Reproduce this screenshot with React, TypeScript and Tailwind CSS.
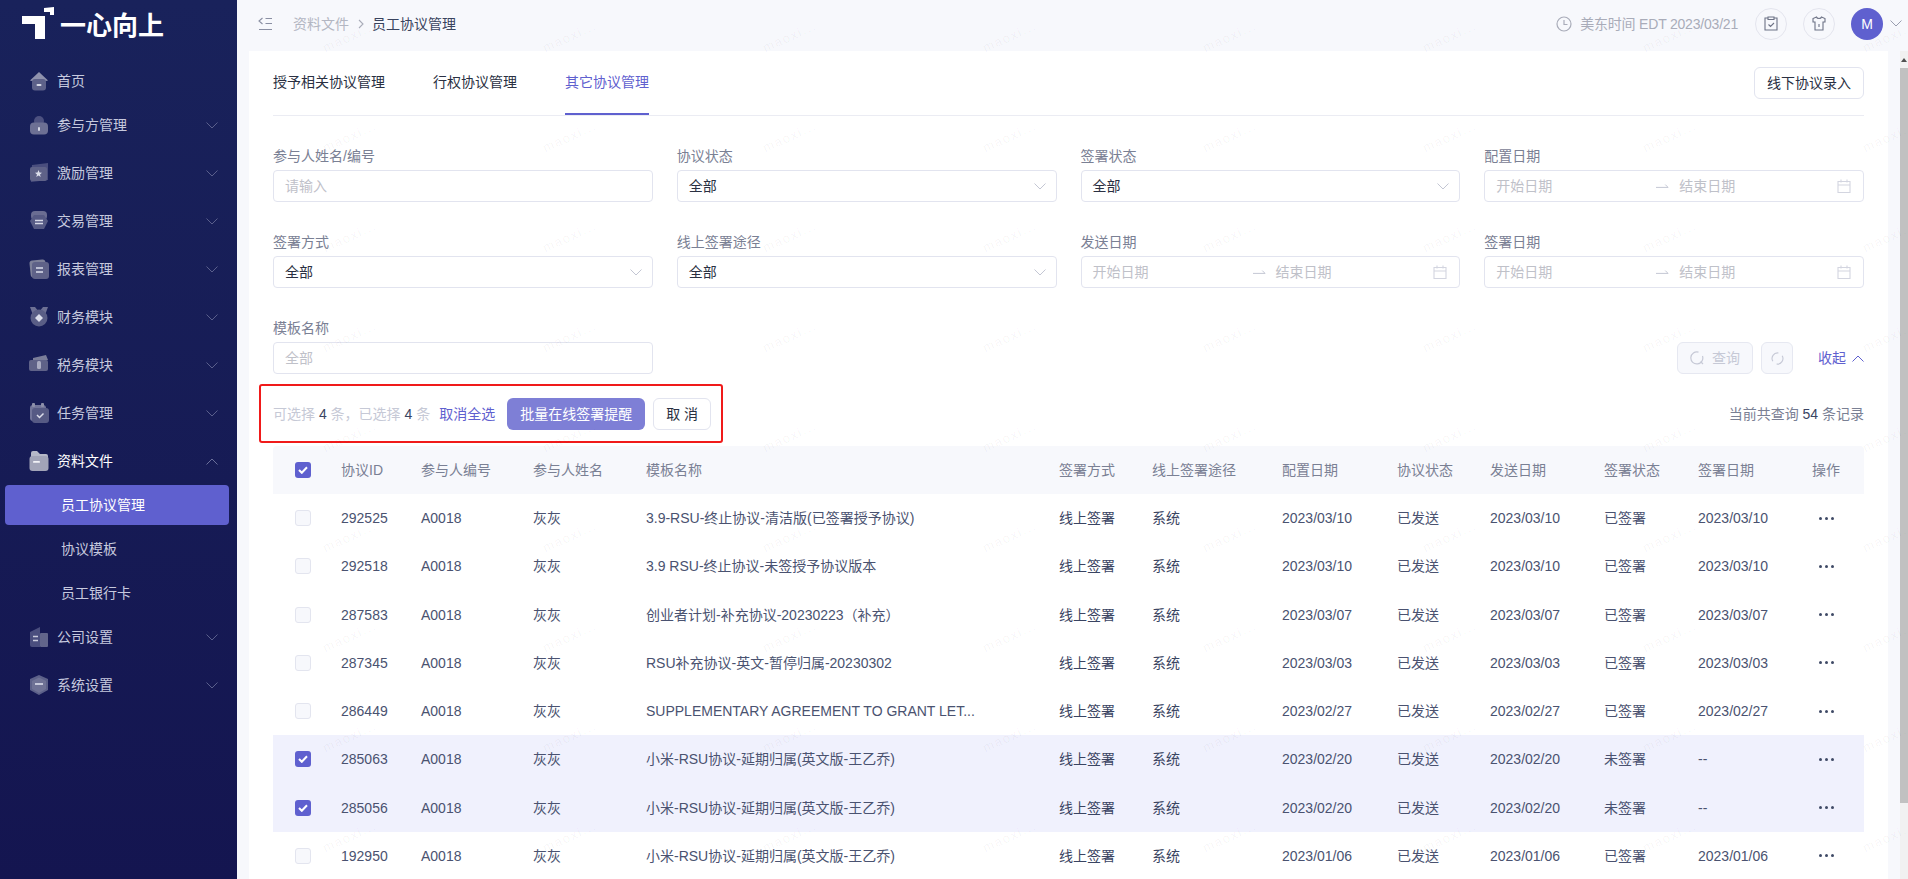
import type { ReactNode } from "react";

const menuIcons: Record<string, ReactNode> = {
  home: (
    <>
      <path d="M10 1 19 9.500 17 10H3L1 9.500z" fill="#8f92ad" />
      <rect x="3" y="8" width="14" height="11.500" rx="3" fill="#5d6189" />
      <rect x="7.500" y="13" width="5" height="2" rx="1" fill="#d6d8e6" />
    </>
  ),
  people: (
    <>
      <circle cx="10" cy="6" r="5" fill="#4d5180" />
      <rect x="1" y="7.500" width="18" height="12" rx="4" fill="#6d7094" />
      <rect x="9" y="12" width="2" height="4" rx="1" fill="#d6d8e6" />
    </>
  ),
  star: (
    <>
      <path d="M3 2 19 0V17L2 19z" fill="#4a4e7e" />
      <rect x="1" y="4" width="17" height="14" rx="2" fill="#5f6288" />
      <path d="m9.500 7 1 2.500 2.500.2-2 1.700.7 2.600-2.200-1.400-2.200 1.400.7-2.600-2-1.700 2.500-.2z" fill="#dcdeeb" />
    </>
  ),
  swap: (
    <>
      <rect x="2" y="0" width="16" height="9" rx="4" fill="#6a6d92" />
      <path d="M5 4h10l4 6-4 8H5l-4-8z" fill="#565a84" />
      <path d="M6 9.500h8M6 12.500h8" stroke="#d6d8e6" strokeWidth="1.300" />
    </>
  ),
  report: (
    <>
      <rect x="1" y="1" width="16" height="17" rx="3" fill="#7d8099" transform="rotate(-6 9 9)" />
      <rect x="3" y="3" width="17" height="17" rx="3" fill="#5f6288" />
      <path d="M7 9h7M7 13h7" stroke="#dcdeeb" strokeWidth="1.500" />
    </>
  ),
  medal: (
    <>
      <path d="M1 0h5l4 5 4-5h5l-3 8H4z" fill="#6d7094" />
      <circle cx="10" cy="11" r="8.500" fill="#5a5e86" />
      <path d="m10 7 4 4-4 4-4-4z" fill="#dcdeeb" />
    </>
  ),
  ticket: (
    <>
      <path d="M4 3 17 0l2 5-15 4z" fill="#7a7d99" />
      <rect x="0" y="5" width="19" height="11" rx="2" fill="#5f6288" />
      <rect x="8" y="6" width="4" height="8" rx="1.500" fill="#a9abc2" />
    </>
  ),
  task: (
    <>
      <rect x="1" y="2" width="16" height="16" rx="3" fill="#72759a" />
      <rect x="3" y="0" width="3" height="4" rx="1" fill="#8c8fa9" />
      <rect x="12" y="0" width="3" height="4" rx="1" fill="#8c8fa9" />
      <rect x="3" y="5" width="17" height="15" rx="3" fill="#565a84" />
      <path d="m8 12 2.500 2.500 4-4" fill="none" stroke="#dcdeeb" strokeWidth="1.500" />
    </>
  ),
  folder: (
    <>
      <path d="M2 2a2 2 0 0 1 2-2h4l3 3h6a2 2 0 0 1 2 2v6H2z" fill="#b6b8c8" />
      <rect x="0.500" y="5" width="19" height="15" rx="3" fill="#a2a4b8" />
      <rect x="4" y="10" width="7" height="1.800" rx="0.900" fill="#f2f2f7" />
    </>
  ),
  company: (
    <>
      <path d="M1 5 11 0v20H3a2 2 0 0 1-2-2z" fill="#4a4e7e" />
      <rect x="11" y="6" width="8" height="14" rx="1" fill="#62658b" />
      <path d="M4 9.500h5M4 13.500h5" stroke="#c9cbdc" strokeWidth="1.400" />
    </>
  ),
  shield: (
    <>
      <path d="M10 0 19 4v11l-9 5-9-5V4z" fill="#5d6189" />
      <path d="M10 2.500 17 6v8l-7 4-7-4V6z" fill="#6f7295" />
      <path d="M6 9h8" stroke="#dcdeeb" strokeWidth="1.600" />
    </>
  ),
};

function MenuIcon({ name }: { name: string }) {
  return (
    <svg viewBox="0 0 20 20" className="w-5 h-5 shrink-0">
      {menuIcons[name]}
    </svg>
  );
}

function Chevron({ up, className }: { up?: boolean; className?: string }) {
  return (
    <svg viewBox="0 0 12 7" fill="none" stroke="currentColor" strokeWidth="1" className={className}>
      <path d={up ? "M0.500 6.500 6 1l5.500 5.500" : "M0.500 0.500 6 6l5.500-5.500"} />
    </svg>
  );
}

const menu = [
  { icon: "people", label: "参与方管理" },
  { icon: "star", label: "激励管理" },
  { icon: "swap", label: "交易管理" },
  { icon: "report", label: "报表管理" },
  { icon: "medal", label: "财务模块" },
  { icon: "ticket", label: "税务模块" },
  { icon: "task", label: "任务管理" },
];

function Sidebar() {
  return (
    <aside className="w-[237px] shrink-0 h-full bg-gradient-to-b from-[#19225b] to-[#141550] text-[#c6c9de] text-sm">
      <div className="h-[61px] flex items-start pl-[22px] pt-[7px]">
        <svg viewBox="0 0 32 32" className="w-8 h-8 shrink-0">
          <path d="M0 9h23v23H13V17L11 17H0zM22 1l10-1v8h-4V5h-6z" fill="#fff" />
        </svg>
        <span className="ml-[6px] mt-[4px] text-[26px] leading-[30px] font-bold text-white whitespace-nowrap">
          一心向上
        </span>
      </div>
      <div className="h-10 flex items-center pl-[29px] gap-2">
        <MenuIcon name="home" />
        <span>首页</span>
      </div>
      {menu.map((m) => (
        <div key={m.label} className="h-12 flex items-center pl-[29px] pr-[19px] gap-2">
          <MenuIcon name={m.icon} />
          <span className="flex-1">{m.label}</span>
          <Chevron className="w-3 h-[7px] text-[#5a5f8c]" />
        </div>
      ))}
      <div className="h-12 flex items-center pl-[29px] pr-[19px] gap-2 text-white">
        <MenuIcon name="folder" />
        <span className="flex-1">资料文件</span>
        <Chevron up className="w-3 h-[7px] text-[#6a6f9a]" />
      </div>
      <div className="ml-[5px] w-[224px] h-10 rounded bg-[#5f60cf] text-white flex items-center pl-[56px]">员工协议管理</div>
      <div className="h-10 mt-1 flex items-center pl-[61px]">协议模板</div>
      <div className="h-10 mt-1 flex items-center pl-[61px]">员工银行卡</div>
      <div className="h-12 flex items-center pl-[29px] pr-[19px] gap-2">
        <MenuIcon name="company" />
        <span className="flex-1">公司设置</span>
        <Chevron className="w-3 h-[7px] text-[#5a5f8c]" />
      </div>
      <div className="h-12 flex items-center pl-[29px] pr-[19px] gap-2">
        <MenuIcon name="shield" />
        <span className="flex-1">系统设置</span>
        <Chevron className="w-3 h-[7px] text-[#5a5f8c]" />
      </div>
    </aside>
  );
}

function TopBar() {
  return (
    <header className="h-[51px] shrink-0 flex items-center text-sm pl-[21px] pr-[6px] pb-1">
      <svg viewBox="0 0 15 14" fill="none" stroke="#8a8fa3" strokeWidth="1.100" className="w-[15px] h-[14px] shrink-0">
        <path d="M4.500 1 1 4l3.500 3M7.500 1.500H14M7.500 6.500H14M1 12.500h13" />
      </svg>
      <span className="ml-[20px] text-[#b3b6c2]">资料文件</span>
      <svg viewBox="0 0 6 10" fill="none" stroke="#a9acb9" strokeWidth="1.100" className="w-[6px] h-[10px] ml-[9px]">
        <path d="m1 1 4 4-4 4" />
      </svg>
      <span className="ml-[8px] text-[#39435e]">员工协议管理</span>
      <div className="flex-1" />
      <svg viewBox="0 0 16 16" fill="none" stroke="#a9acb9" strokeWidth="1.200" className="w-4 h-4">
        <circle cx="8" cy="8" r="7" />
        <path d="M8 4v4.500h3.500" />
      </svg>
      <span className="ml-2 text-[#a9acb9] whitespace-nowrap tracking-[-0.2px]">美东时间 EDT 2023/03/21</span>
      <button className="ml-[17px] w-8 h-8 rounded-full border border-[#e4e5ee] flex items-center justify-center">
        <svg viewBox="0 0 14 15" fill="none" stroke="#6d7285" strokeWidth="1.100" className="w-[14px] h-[15px]">
          <path d="M4 2H1v12h12V2h-3M4 1h6v2.500H4zM4.500 8.500 6.500 10.500 10 7" />
        </svg>
      </button>
      <button className="ml-4 w-8 h-8 rounded-full border border-[#e4e5ee] flex items-center justify-center">
        <svg viewBox="0 0 14 15" fill="none" stroke="#6d7285" strokeWidth="1.100" className="w-[14px] h-[15px]">
          <path d="M4.500 1 1 2.500V6h2v8h8V6h2V2.500L9.500 1C9 3 5 3 4.500 1zM7 8v3" />
        </svg>
      </button>
      <div className="ml-4 w-8 h-8 rounded-full bg-[#5f60cf] text-white text-sm font-medium flex items-center justify-center">M</div>
      <Chevron className="ml-[7px] w-3 h-[7px] text-[#9a9eb0]" />
    </header>
  );
}

function FieldLabel({ children }: { children: ReactNode }) {
  return <div className="leading-[22px] text-[#7a8094] mb-[3px]">{children}</div>;
}

function SelectBox({ value = "全部" }: { value?: string }) {
  return (
    <div className="h-8 rounded border border-[#e2e4ef] flex items-center pl-[11px] pr-[10px] justify-between">
      <span className="text-[#2a3042]">{value}</span>
      <Chevron className="w-3 h-[7px] text-[#c3c6d3]" />
    </div>
  );
}

function DateRange() {
  return (
    <div className="h-8 rounded border border-[#e2e4ef] flex items-center pl-[11px] pr-[12px] text-[#bfc1c9]">
      <span className="w-[160px]">开始日期</span>
      <svg viewBox="0 0 14 6" fill="none" stroke="#bfc3d0" strokeWidth="1" className="w-[13px] h-[6px]">
        <path d="M0 4.500h13L10 1.500" />
      </svg>
      <span className="ml-[10px] flex-1">结束日期</span>
      <svg viewBox="0 0 14 14" fill="none" stroke="#d3d5e0" strokeWidth="1.100" className="w-[14px] h-[14px]">
        <path d="M1 2.500h12v11H1zM1 6h12M4 .500v3M10 .500v3" />
      </svg>
    </div>
  );
}

function Filters() {
  return (
    <div className="grid grid-cols-4 gap-x-6 gap-y-[29px] pt-[29px] text-sm">
      <div>
        <FieldLabel>参与人姓名/编号</FieldLabel>
        <div className="h-8 rounded border border-[#e2e4ef] flex items-center pl-[11px] text-[#bfc1c9]">请输入</div>
      </div>
      <div>
        <FieldLabel>协议状态</FieldLabel>
        <SelectBox />
      </div>
      <div>
        <FieldLabel>签署状态</FieldLabel>
        <SelectBox />
      </div>
      <div>
        <FieldLabel>配置日期</FieldLabel>
        <DateRange />
      </div>
      <div>
        <FieldLabel>签署方式</FieldLabel>
        <SelectBox />
      </div>
      <div>
        <FieldLabel>线上签署途径</FieldLabel>
        <SelectBox />
      </div>
      <div>
        <FieldLabel>发送日期</FieldLabel>
        <DateRange />
      </div>
      <div>
        <FieldLabel>签署日期</FieldLabel>
        <DateRange />
      </div>
      <div>
        <FieldLabel>模板名称</FieldLabel>
        <div className="h-8 rounded border border-[#e2e4ef] flex items-center pl-[11px] text-[#bfc1c9]">全部</div>
      </div>
      <div className="col-span-3 flex items-end justify-end">
        <button className="w-[76px] h-8 rounded-md border border-[#e6e8f1] bg-[#f7f8fc] flex items-center justify-center gap-2 text-[#c6c9d6]">
          <svg viewBox="0 0 14 14" fill="none" stroke="#c6c9d6" strokeWidth="1.200" className="w-[14px] h-[14px]">
            <path d="M8.500 1.200A6 6 0 1 0 12.500 5M10.500 10.500 13 13" />
          </svg>
          查询
        </button>
        <button className="ml-2 w-8 h-8 rounded-md border border-[#e6e8f1] bg-[#f7f8fc] flex items-center justify-center">
          <svg viewBox="0 0 14 14" fill="none" stroke="#c6c9d6" strokeWidth="1.200" className="w-[13px] h-[13px]">
            <path d="M2 10A6 6 0 0 1 8 1M12 4a6 6 0 0 1-6 9" />
          </svg>
        </button>
        <div className="ml-[25px] h-8 flex items-center gap-[6px] text-[#5f60cf]">
          收起
          <Chevron up className="w-3 h-[7px]" />
        </div>
      </div>
    </div>
  );
}

function Checkbox({ state }: { state: "off" | "on" }) {
  if (state === "on") {
    return (
      <span className="w-4 h-4 rounded-[3px] bg-[#5f60cf] flex items-center justify-center">
        <svg viewBox="0 0 10 8" fill="none" stroke="#fff" strokeWidth="2" className="w-[10px] h-2">
          <path d="m1 4 2.800 2.800L9 1.200" />
        </svg>
      </span>
    );
  }
  return <span className="block w-4 h-4 rounded-[3px] bg-[#f7f8fc] border border-[#e3e5ef]" />;
}

const gridCols = "grid grid-cols-[68px_80px_112px_113px_413px_93px_130px_115px_93px_114px_94px_114px_52px] items-center";

const headers = ["协议ID", "参与人编号", "参与人姓名", "模板名称", "签署方式", "线上签署途径", "配置日期", "协议状态", "发送日期", "签署状态", "签署日期", "操作"];

const xiaomi = "小米-RSU协议-延期归属(英文版-王乙乔)";

const rows = [
  { id: "292525", name: "3.9-RSU-终止协议-清洁版(已签署授予协议)", date: "2023/03/10", status: "已签署", signed: "2023/03/10" },
  { id: "292518", name: "3.9 RSU-终止协议-未签授予协议版本", date: "2023/03/10", status: "已签署", signed: "2023/03/10" },
  { id: "287583", name: "创业者计划-补充协议-20230223（补充）", date: "2023/03/07", status: "已签署", signed: "2023/03/07" },
  { id: "287345", name: "RSU补充协议-英文-暂停归属-20230302", date: "2023/03/03", status: "已签署", signed: "2023/03/03" },
  { id: "286449", name: "SUPPLEMENTARY AGREEMENT TO GRANT LET...", date: "2023/02/27", status: "已签署", signed: "2023/02/27" },
  { id: "285063", name: xiaomi, date: "2023/02/20", status: "未签署", signed: "--", checked: true },
  { id: "285056", name: xiaomi, date: "2023/02/20", status: "未签署", signed: "--", checked: true },
  { id: "192950", name: xiaomi, date: "2023/01/06", status: "已签署", signed: "2023/01/06" },
];

function Table() {
  return (
    <div className="text-sm text-[#4a5270]">
      <div className={`${gridCols} h-12 rounded-t bg-[#f7f8fc] text-[#7a8094]`}>
        <div className="pl-[22px]">
          <Checkbox state="on" />
        </div>
        {headers.map((h) => (
          <div key={h}>{h}</div>
        ))}
      </div>
      {rows.map((r) => (
        <div key={r.id} className={`${gridCols} h-[48.25px] ${r.checked ? "bg-[#f0f1fd]" : ""}`}>
          <div className="pl-[22px]">
            <Checkbox state={r.checked ? "on" : "off"} />
          </div>
          <div>{r.id}</div>
          <div>A0018</div>
          <div>灰灰</div>
          <div>{r.name}</div>
          <div className="text-[#3a4462]">线上签署</div>
          <div className="text-[#3a4462]">系统</div>
          <div>{r.date}</div>
          <div>已发送</div>
          <div>{r.date}</div>
          <div>{r.status}</div>
          <div>{r.signed}</div>
          <div className="pl-[7px] flex gap-[3px]">
            <span className="w-[3px] h-[3px] rounded-full bg-[#3f4a66]" />
            <span className="w-[3px] h-[3px] rounded-full bg-[#3f4a66]" />
            <span className="w-[3px] h-[3px] rounded-full bg-[#3f4a66]" />
          </div>
        </div>
      ))}
    </div>
  );
}

function Watermarks() {
  const cells = Array.from({ length: 72 });
  return (
    <div className="absolute left-[3px] -top-[13px] pointer-events-none grid grid-cols-[repeat(8,220px)] auto-rows-[100px]">
      {cells.map((_, i) => (
        <div key={i} className="flex items-center justify-center">
          <span className="-rotate-[24deg] text-[13px] tracking-[1.500px] text-black/[0.045] whitespace-nowrap">maoxi...</span>
        </div>
      ))}
    </div>
  );
}

export default function App() {
  return (
    <div className="flex h-screen overflow-hidden bg-[#f7f8fc] font-['Liberation_Sans','Noto_Sans_CJK_SC',sans-serif]">
      <Sidebar />
      <div className="relative flex-1 min-w-0 flex flex-col overflow-hidden">
        <TopBar />
        <div className="flex-1 min-h-0 flex overflow-hidden">
          <main className="flex-1 min-w-0 mx-3 bg-white px-6">
            <div className="h-[65px] border-b border-[#ebecf3] flex text-sm">
              <div className="h-16 pt-5 leading-[22px] text-[#2a3042]">授予相关协议管理</div>
              <div className="ml-12 h-16 pt-5 leading-[22px] text-[#2a3042]">行权协议管理</div>
              <div className="ml-12 h-16 pt-5 leading-[22px] text-[#5f60cf] border-b-2 border-[#5f60cf]">其它协议管理</div>
              <button className="ml-auto mt-4 w-[110px] h-8 rounded-md border border-[#e2e4ef] text-[#2a3042]">线下协议录入</button>
            </div>
            <Filters />
            <div className="relative mt-6 mb-4 h-8 flex items-center text-sm">
              <div className="absolute -left-[14px] -top-[14px] w-[464px] h-[59px] border-2 border-[#f01a1a] rounded-[3px]" />
              <span className="text-[#c6c9d6]">
                可选择 <span className="text-[#3a4462]">4</span> 条，已选择 <span className="text-[#3a4462]">4</span> 条
              </span>
              <span className="ml-[9px] text-[#5f60cf]">取消全选</span>
              <button className="ml-3 w-[138px] h-8 rounded-md bg-[#7e7fd6] text-white">批量在线签署提醒</button>
              <button className="ml-2 w-[58px] h-8 rounded-md border border-[#e2e4ef] text-[#2a3042]">取 消</button>
              <span className="ml-auto text-[#7a8094]">
                当前共查询 <span className="text-[#3a4462]">54</span> 条记录
              </span>
            </div>
            <Table />
          </main>
          <div className="w-2 shrink-0 bg-[#f1f1f1] flex flex-col">
            <div className="h-[17px] flex items-center justify-center">
              <span className="w-0 h-0 border-x-[3px] border-x-transparent border-b-[4px] border-b-[#505050]" />
            </div>
            <div className="h-[735px] bg-[#c1c1c1]" />
          </div>
        </div>
        <Watermarks />
      </div>
    </div>
  );
}
